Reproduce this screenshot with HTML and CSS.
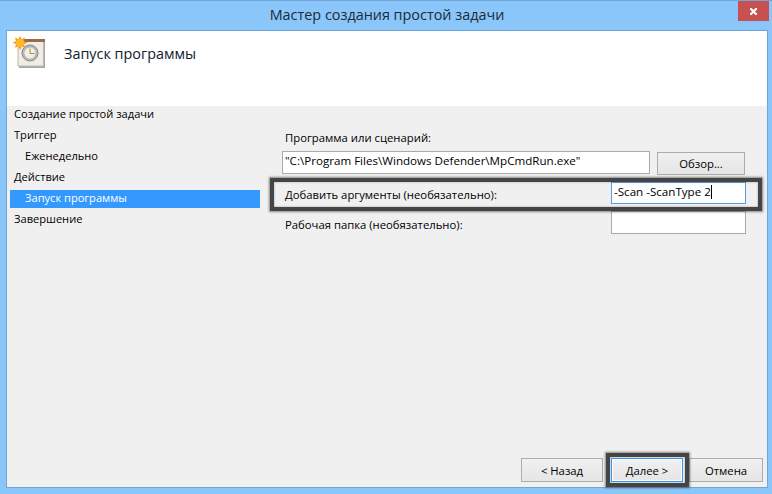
FILE: index.html
```html
<!DOCTYPE html>
<html lang="ru">
<head>
<meta charset="utf-8">
<title>Мастер создания простой задачи</title>
<link rel="stylesheet" href="styles.css">
</head>
<body>
<div class="window">
  <div class="titlebar">
    <span class="title">Мастер создания простой задачи</span>
    <button class="close" aria-label="Закрыть">
      <svg width="9" height="9" viewBox="0 0 9 9"><path d="M1 1h1.500l2 2 2-2H8v1.500l-2 2 2 2V8H6.500l-2-2-2 2H1V6.500l2-2-2-2z" fill="#fff"/></svg>
    </button>
  </div>
  <div class="client">
    <header class="header">
      <svg class="task-icon" width="34" height="34" viewBox="0 0 34 34">
        <rect x="7" y="6" width="26" height="26" fill="#a8a8a8"/>
        <rect x="6" y="5" width="25.500" height="25" fill="#f1ede4" stroke="#bdb9b0" stroke-width="1"/>
        <rect x="9" y="3" width="24" height="3" fill="#9b6a4c"/>
        <circle cx="18" cy="17" r="8" fill="#b7babc" stroke="#878b8e" stroke-width="1"/>
        <circle cx="18" cy="17" r="5.500" fill="#f3efe2"/>
        <path d="M18 12.500V17.500H22.500" fill="none" stroke="#b58a2e" stroke-width="1"/>
        <path d="M8 0l1.600 3.200 3.400-1.700-1 3.700 3.500 1.300-3.500 1.500 1 3.700-3.400-1.500L8 14l-1.600-3.700-3.400 1.500 1-3.700L.5 6.500 4 5.200l-1-3.700 3.400 1.700z" fill="#f29c11"/>
        <circle cx="8" cy="7" r="4" fill="#fdb92a"/>
      </svg>
      <h1 class="heading">Запуск программы</h1>
    </header>
    <div class="body">
      <nav class="steps">
        <div class="step">Создание простой задачи</div>
        <div class="step">Триггер</div>
        <div class="step sub">Еженедельно</div>
        <div class="step">Действие</div>
        <div class="step sub current">Запуск программы</div>
        <div class="step">Завершение</div>
      </nav>
      <main class="form">
        <div class="label first">Программа или сценарий:</div>
        <div class="program-row">
          <div class="input program">"C:\Program Files\Windows Defender\MpCmdRun.exe"</div>
          <button class="btn browse">Обзор...</button>
        </div>
        <div class="field-row args-row">
          <div class="label">Добавить аргументы (необязательно):</div>
          <div class="input small focused">-Scan -ScanType 2<span class="caret"></span></div>
        </div>
        <div class="field-row folder-row">
          <div class="label">Рабочая папка (необязательно):</div>
          <div class="input small"></div>
        </div>
      </main>
    </div>
    <footer class="footer">
      <button class="btn nav">&lt; Назад</button>
      <button class="btn nav next">Далее &gt;</button>
      <button class="btn nav cancel">Отмена</button>
    </footer>
  </div>
  <div class="mark mark-args"></div>
  <div class="mark mark-next"></div>
</div>
</body>
</html>
```
FILE: styles.css
```css
* { box-sizing: border-box; }
html, body { margin: 0; padding: 0; width: 772px; height: 494px; overflow: hidden; }
body { font-family: "Open Sans", "Noto Sans", sans-serif; font-size: 11.3px; color: #000; }
.window {
  position: relative; width: 772px; height: 494px; background: #8bc6fa;
  border-top: 1px solid #6fa5d8; padding: 0 4px 6px 6px;
  display: flex; flex-direction: column;
}
.titlebar { height: 29px; flex: none; position: relative; display: flex; justify-content: center; align-items: center; }
.title { font-size: 14.4px; color: #1c2a38; position: relative; top: -1px; white-space: nowrap; }
.close {
  position: absolute; right: -1px; top: 0; width: 31px; height: 20px;
  background: #c75050; border: 0; padding: 0; display: flex; align-items: center; justify-content: center;
}
.client { flex: 1; border: 1px solid #6fa5d8; display: flex; flex-direction: column; background: #f0f0f0; }
.header { height: 75px; flex: none; background: #fff; display: flex; align-items: flex-start; }
.task-icon { margin: 5px 0 0 5px; flex: none; }
.heading { margin: 13px 0 0 18px; font-size: 14.4px; font-weight: 400; color: #10202f; }
.body { flex: 1; display: flex; min-height: 0; }
.steps { width: 253px; flex: none; padding: 0 0 0 3px; font-size: 11.1px; }
.step { height: 21px; line-height: 16px; padding-left: 4px; white-space: nowrap; }
.step.sub { padding-left: 15px; height: 18px; line-height: 15px; margin-bottom: 3px; }
.step.current { background: #3399ff; color: #fff; }
.form { flex: 1; padding: 24px 0 0 25px; }
.label { white-space: nowrap; line-height: 16px; }
.program-row { display: flex; align-items: flex-start; margin-top: 6px; gap: 7px; }
.input { height: 22px; background: #fff; border: 1px solid #ababab; line-height: 18px; padding-left: 2px; white-space: nowrap; }
.program { width: 368px; height: 23px; margin: -1px 0 0 -3px; font-size: 11.6px; }
.btn {
  font: inherit; color: #000; border: 1px solid #acacac; padding: 0;
  background: linear-gradient(#f0f0f0, #e5e5e5);
}
.browse { width: 88px; height: 23px; }
.field-row { display: flex; align-items: flex-start; justify-content: space-between; width: 461px; }
.args-row { margin-top: 7px; }
.folder-row { margin-top: 7px; }
.args-row .label { margin-top: 5px; }
.folder-row .label { margin-top: 6px; }
.small { width: 135px; margin-left: auto; font-size: 11.6px; }
.folder-row .small { height: 23px; }
.focused { border-color: #569de5; }
.caret { display: inline-block; width: 1px; height: 14px; background: #000; vertical-align: -3px; }
.footer { height: 47px; flex: none; display: flex; align-items: flex-start; padding: 18px 0 0 514px; }
.nav { width: 82px; height: 24px; }
.next { margin-left: 8px; width: 72px; border-color: #3399ff; box-shadow: inset 0 0 0 1px #fff; }
.cancel { margin-left: 6px; width: 74px; }
.mark { position: absolute; border: 4px solid #454545; box-shadow: 0 0 2px 1px rgba(60,60,60,.6), inset 0 0 2px rgba(60,60,60,.5); pointer-events: none; }
.mark-args { left: 270px; top: 177px; width: 492px; height: 33px; }
.mark-next { left: 606px; top: 452px; width: 83px; height: 34px; }
```
